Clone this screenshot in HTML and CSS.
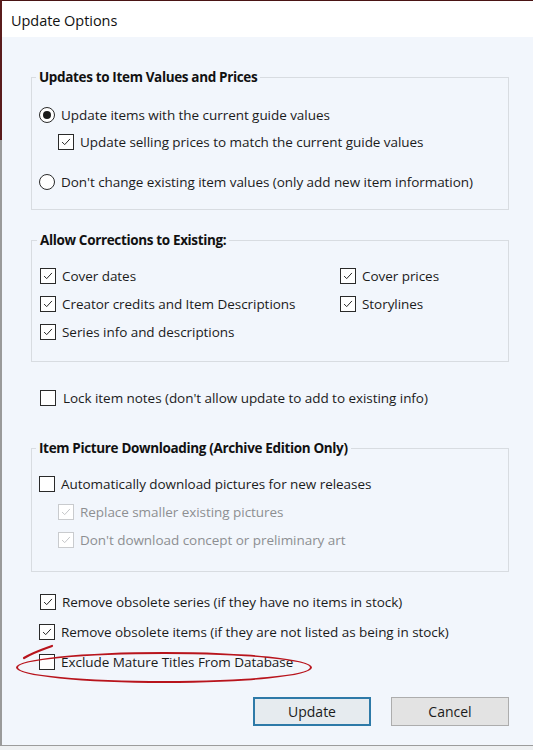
FILE: index.html
```html
<!DOCTYPE html>
<html>
<head>
<meta charset="utf-8">
<link rel="stylesheet" href="styles.css">
</head>
<body>
<div class="window">
  <div class="titlebar">Update Options</div>
  <div class="content">
    <fieldset class="group g1">
      <legend>Updates to Item Values and Prices</legend>
      <div class="row">
        <span class="radio on"></span><span class="lbl">Update items with the current guide values</span>
      </div>
      <div class="row sub">
        <span class="box"><svg viewBox="0 0 16 16"><polyline points="3.5,8 6.5,11 12.5,4.5"/></svg></span><span class="lbl">Update selling prices to match the current guide values</span>
      </div>
      <div class="row gapped">
        <span class="radio"></span><span class="lbl">Don't change existing item values (only add new item information)</span>
      </div>
    </fieldset>

    <fieldset class="group g2">
      <legend>Allow Corrections to Existing:</legend>
      <div class="grid">
        <div class="row">
          <span class="box"><svg viewBox="0 0 16 16"><polyline points="3.5,8 6.5,11 12.5,4.5"/></svg></span><span class="lbl">Cover dates</span>
        </div>
        <div class="row">
          <span class="box"><svg viewBox="0 0 16 16"><polyline points="3.5,8 6.5,11 12.5,4.5"/></svg></span><span class="lbl">Cover prices</span>
        </div>
        <div class="row">
          <span class="box"><svg viewBox="0 0 16 16"><polyline points="3.5,8 6.5,11 12.5,4.5"/></svg></span><span class="lbl">Creator credits and Item Descriptions</span>
        </div>
        <div class="row">
          <span class="box"><svg viewBox="0 0 16 16"><polyline points="3.5,8 6.5,11 12.5,4.5"/></svg></span><span class="lbl">Storylines</span>
        </div>
        <div class="row">
          <span class="box"><svg viewBox="0 0 16 16"><polyline points="3.5,8 6.5,11 12.5,4.5"/></svg></span><span class="lbl">Series info and descriptions</span>
        </div>
      </div>
    </fieldset>

    <div class="row lock">
      <span class="box"></span><span class="lbl">Lock item notes (don't allow update to add to existing info)</span>
    </div>

    <fieldset class="group g3">
      <legend>Item Picture Downloading (Archive Edition Only)</legend>
      <div class="row">
        <span class="box"></span><span class="lbl">Automatically download pictures for new releases</span>
      </div>
      <div class="row sub disabled">
        <span class="box"><svg viewBox="0 0 16 16"><polyline points="3.5,8 6.5,11 12.5,4.5"/></svg></span><span class="lbl">Replace smaller existing pictures</span>
      </div>
      <div class="row sub disabled">
        <span class="box"><svg viewBox="0 0 16 16"><polyline points="3.5,8 6.5,11 12.5,4.5"/></svg></span><span class="lbl">Don't download concept or preliminary art</span>
      </div>
    </fieldset>

    <div class="extras">
      <div class="row tall">
        <span class="box"><svg viewBox="0 0 16 16"><polyline points="3.5,8 6.5,11 12.5,4.5"/></svg></span><span class="lbl">Remove obsolete series (if they have no items in stock)</span>
      </div>
      <div class="row tall">
        <span class="box"><svg viewBox="0 0 16 16"><polyline points="3.5,8 6.5,11 12.5,4.5"/></svg></span><span class="lbl">Remove obsolete items (if they are not listed as being in stock)</span>
      </div>
      <div class="row tall">
        <span class="box"></span><span class="lbl">Exclude Mature Titles From Database</span>
      </div>
    </div>

    <div class="buttons">
      <button class="btn default">Update</button>
      <button class="btn">Cancel</button>
    </div>
  </div>
  <div class="annot"></div>
  <svg class="tail" viewBox="0 0 40 20" width="40" height="20">
    <path d="M36 2 C 28 5, 18 8, 8 14"/>
  </svg>
</div>
</body>
</html>
```

FILE: styles.css
```css
html, body {
  margin: 0;
  padding: 0;
  background: #eef0f2;
}

body {
  font-family: "Open Sans", "Noto Sans", sans-serif;
  font-size: 13.5px;
  letter-spacing: -0.05px;
  color: #1b1b1b;
}

.window {
  position: relative;
  width: 531px;
  height: 744px;
  border-top: 1px solid #4a1414;
  border-left: 2px solid #9a9a9a;
  border-bottom: 1px solid #9c9c9c;
  background: #f2f6fc;
  display: flex;
  flex-direction: column;
}

.window::before {
  content: "";
  position: absolute;
  left: -2px;
  top: -1px;
  width: 2px;
  height: 140px;
  background: #5a1c1c;
}

.titlebar {
  height: 36px;
  background: #ffffff;
  display: flex;
  align-items: center;
  padding-left: 9px;
  font-size: 14.5px;
  color: #111;
  padding-top: 2px;
  box-sizing: border-box;
}

.content {
  padding: 0 24px 0 29px;
  display: flex;
  flex-direction: column;
}

.group {
  margin: 0;
  border: 1px solid #d8dce1;
  padding: 0 8px;
  min-width: 0;
}

.group legend {
  font-weight: 700;
  line-height: 20px;
  padding: 0 3px;
  margin-left: -3px;
  letter-spacing: -0.35px;
  color: #111;
}

.g1 {
  margin-top: 30px;
  padding-top: 14px;
  padding-bottom: 14px;
  padding-left: 7px;
}

.g2 {
  margin-top: 20px;
  padding-top: 12px;
  padding-bottom: 15px;
}

.g3 {
  margin-top: 26px;
  padding-top: 12px;
  padding-bottom: 17px;
  padding-left: 7px;
}

.row {
  height: 28px;
  display: flex;
  align-items: center;
  gap: 6px;
  white-space: nowrap;
}

.g1 .row {
  height: 27px;
}

.row.sub {
  padding-left: 19px;
}

.row.gapped {
  margin-top: 13px;
}

.grid {
  display: grid;
  grid-template-columns: 300px 1fr;
}

.lock {
  margin-top: 22px;
  padding-left: 9px;
  gap: 7px;
}

.extras {
  margin-top: 15px;
  padding-left: 9px;
  display: flex;
  flex-direction: column;
}

.row.tall {
  height: 30px;
}

.extras .row:nth-child(n+2) {
  margin-left: -1px;
}

.box {
  width: 14px;
  height: 14px;
  border: 1px solid #2a2a2a;
  background: #ffffff;
  flex: none;
  display: block;
}

.box svg {
  display: block;
  width: 14px;
  height: 14px;
  fill: none;
  stroke: #1f1f1f;
  stroke-width: 1.1;
}

.radio {
  width: 14px;
  height: 14px;
  border: 1px solid #2a2a2a;
  border-radius: 50%;
  background: #ffffff;
  flex: none;
  position: relative;
}

.radio.on::after {
  content: "";
  position: absolute;
  left: 3px;
  top: 3px;
  width: 8px;
  height: 8px;
  border-radius: 50%;
  background: #1a1a1a;
}

.disabled .box {
  border-color: #c9cbce;
}

.disabled .box svg {
  stroke: #c2c4c7;
}

.disabled .lbl {
  color: #8d8f92;
}

.buttons {
  margin-top: 20px;
  display: flex;
  justify-content: flex-end;
  gap: 20px;
}

.btn {
  width: 118px;
  height: 29px;
  font-family: inherit;
  font-size: 14px;
  color: #1b1b1b;
  background: #e3e3e3;
  border: 1px solid #adadad;
  padding: 0;
}

.btn.default {
  background: #e6ebef;
  border: 2px solid #2e7aa8;
}

.annot {
  position: absolute;
  left: 14px;
  top: 651px;
  width: 292px;
  height: 27px;
  border: 2px solid #b8141c;
  border-radius: 50%;
  z-index: 3;
  pointer-events: none;
}

.tail {
  position: absolute;
  left: 14px;
  top: 643px;
  z-index: 3;
}

.tail path {
  fill: none;
  stroke: #b8141c;
  stroke-width: 2.2;
  stroke-linecap: round;
}
```
